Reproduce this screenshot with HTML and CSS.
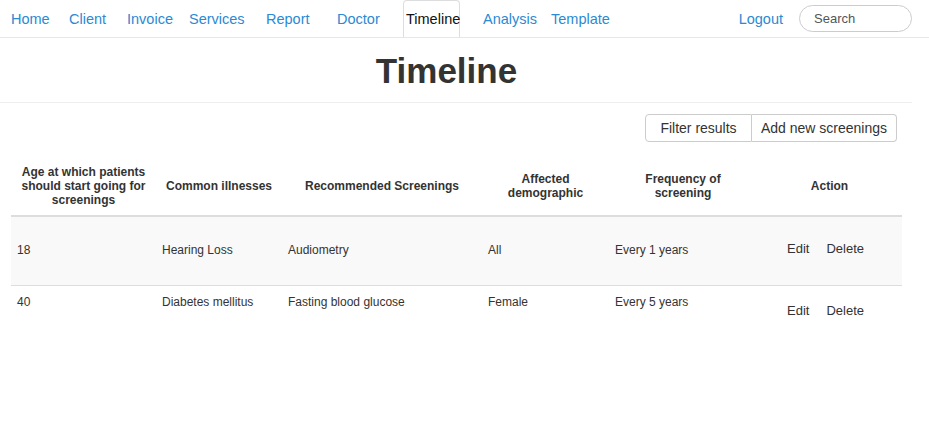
FILE: index.html
```html
<!DOCTYPE html>
<html lang="en">
<head>
<meta charset="utf-8">
<title>Timeline</title>
<link rel="stylesheet" href="styles.css">
</head>
<body>
<nav class="topnav">
  <ul class="nav-links">
    <li><a href="#">Home</a></li>
    <li><a href="#">Client</a></li>
    <li><a href="#">Invoice</a></li>
    <li><a href="#">Services</a></li>
    <li><a href="#">Report</a></li>
    <li><a href="#">Doctor</a></li>
    <li><a href="#" class="tab-active">Timeline</a></li>
    <li><a href="#">Analysis</a></li>
    <li><a href="#">Template</a></li>
  </ul>
  <div class="nav-right">
    <a href="#" class="logout">Logout</a>
    <input class="search" type="text" placeholder="Search">
  </div>
</nav>
<main class="page">
  <header class="page-header">
    <h1 class="title">Timeline</h1>
  </header>
  <div class="toolbar">
    <div class="btn-group">
      <button class="btn btn-filter">Filter results</button>
      <button class="btn btn-add">Add new screenings</button>
    </div>
  </div>
  <table class="grid">
    <colgroup>
      <col class="c1"><col class="c2"><col class="c3"><col class="c4"><col class="c5"><col class="c6">
    </colgroup>
    <thead>
      <tr>
        <th>Age at which patients should start going for screenings</th>
        <th>Common illnesses</th>
        <th>Recommended Screenings</th>
        <th>Affected demographic</th>
        <th class="th-narrow">Frequency of screening</th>
        <th>Action</th>
      </tr>
    </thead>
    <tbody>
      <tr class="row-a">
        <td>18</td>
        <td>Hearing Loss</td>
        <td>Audiometry</td>
        <td>All</td>
        <td>Every 1 years</td>
        <td class="actions"><a href="#" class="act">Edit</a><a href="#" class="act">Delete</a></td>
      </tr>
      <tr class="row-b">
        <td>40</td>
        <td>Diabetes mellitus</td>
        <td>Fasting blood glucose</td>
        <td>Female</td>
        <td>Every 5 years</td>
        <td class="actions"><a href="#" class="act">Edit</a><a href="#" class="act">Delete</a></td>
      </tr>
    </tbody>
  </table>
</main>
</body>
</html>
```
FILE: styles.css
```css
* { box-sizing: border-box; }
html, body { margin: 0; padding: 0; background: #fff; }
body {
  font-family: "Liberation Sans", Arial, sans-serif;
  color: #333;
  font-size: 14px;
}
a { text-decoration: none; }

.topnav {
  display: flex;
  height: 38px;
  border-bottom: 1px solid #e7e7e7;
}
.nav-links {
  list-style: none;
  margin: 0;
  padding: 0 0 0 11px;
  display: grid;
  grid-template-columns: 58px 58px 62px 77px 71px 66px 80px 68px auto;
}
.nav-links li { display: flex; }
.nav-links a {
  display: block;
  font-size: 14.5px;
  line-height: 36px;
  padding-top: 1px;
  height: 37px;
  color: #2b8ad3;
  white-space: nowrap;
}
.nav-links a.tab-active {
  color: #111;
  width: 57px;
  padding-left: 2px;
  border: 1px solid #ddd;
  border-bottom: none;
  border-radius: 4px 4px 0 0;
  line-height: 35px;
}
.nav-right {
  margin-left: auto;
  display: flex;
  align-items: center;
  gap: 16px;
  padding-right: 17px;
}
.logout {
  font-size: 14.5px;
  line-height: 36px;
  padding-top: 1px;
  color: #2b8ad3;
}
.search {
  width: 113px;
  height: 27px;
  border: 1px solid #ccc;
  border-radius: 14px;
  padding: 0 0 0 14px;
  font-family: "Liberation Sans", Arial, sans-serif;
  font-size: 13px;
  color: #555;
  outline: none;
}
.search::placeholder { color: #555; }

.page { width: 912px; }
.page-header {
  border-bottom: 1px solid #eee;
  padding: 0 19px 11px 0;
  text-align: center;
}
.title {
  margin: 14px 0 0;
  font-size: 35px;
  line-height: 38.5px;
  font-weight: bold;
  color: #333;
}

.toolbar {
  display: flex;
  justify-content: flex-end;
  padding: 11px 15px 0 0;
}
.btn-group { display: flex; }
.btn {
  font-family: "Liberation Sans", Arial, sans-serif;
  font-size: 14px;
  line-height: 18px;
  padding: 4px 0;
  text-align: center;
  background: #fff;
  color: #333;
  border: 1px solid #ccc;
  margin: 0;
}
.btn-filter { width: 107px; border-radius: 4px 0 0 4px; }
.btn-add { width: 145px; border-radius: 0 4px 4px 0; border-left: none; }

.grid {
  margin: 15px 0 0 11px;
  width: 891px;
  table-layout: fixed;
  border-collapse: separate;
  border-spacing: 0;
  font-size: 12px;
}
.c1 { width: 145px; }
.c2 { width: 126px; }
.c3 { width: 200px; }
.c4 { width: 127px; }
.c5 { width: 148px; }
.c6 { width: 145px; }
.grid th {
  font-weight: bold;
  text-align: center;
  vertical-align: middle;
  padding: 8px 6px;
  line-height: normal;
  border-bottom: 2px solid #ddd;
  color: #333;
}
.grid th.th-narrow { padding: 8px 22px; }
.grid td {
  text-align: left;
  padding: 0 6px;
  line-height: 17px;
  color: #333;
}
.row-a td {
  background: #f9f9f9;
  height: 68px;
  vertical-align: middle;
}
.row-a td.actions { padding-bottom: 3px; }
.row-b td {
  vertical-align: top;
  border-top: 1px solid #ddd;
  padding-top: 8px;
}
.grid td.actions { padding-left: 30px; }
.row-b td.actions { padding-top: 16px; }
.act {
  font-size: 13px;
  color: #333;
  margin-right: 17px;
}
```
